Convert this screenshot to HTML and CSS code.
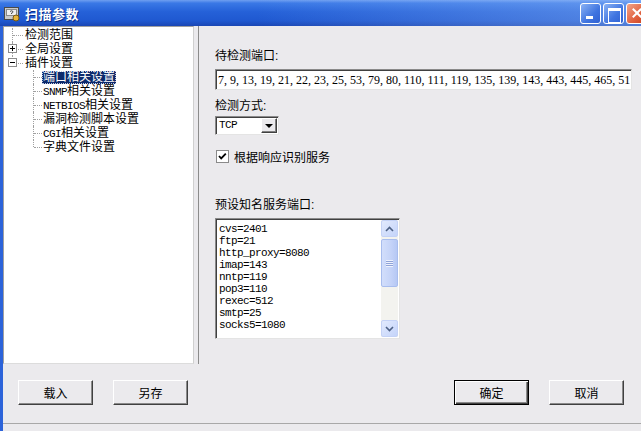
FILE: index.html
```html
<!DOCTYPE html>
<html lang="zh-CN">
<head>
  <meta charset="UTF-8">
  <title>扫描参数</title>
  <link rel="stylesheet" href="styles.css">
</head>
<body>
  <div class="window">
    <div class="titlebar">
      <svg class="app-icon" viewBox="0 0 18 18" width="18" height="18">
        <rect x="1.5" y="3.5" width="14" height="12" fill="#c9c9c9" stroke="#4a4a4a"/>
        <rect x="3.5" y="5.5" width="10" height="6" fill="#efefef" stroke="#8a8a8a"/>
        <path d="M7 7.5 q1.5 -1.5 3 0 q0 1.5 -1.5 1.5 v1" fill="none" stroke="#505050" stroke-width="1"/>
        <circle cx="13" cy="14" r="3" fill="#e6b43a" stroke="#7a5a10"/>
      </svg>
      <span class="title">扫描参数</span>
      <div class="caption-btns">
        <span class="cap-btn min"></span>
        <span class="cap-btn max"></span>
        <span class="cap-btn close"></span>
      </div>
    </div>

    <div class="frame">
      <div class="main">
        <div class="tree">
          <div class="node"><span class="ind root"></span><span class="label">检测范围</span></div>
          <div class="node"><span class="ind root"><span class="toggle plus"></span></span><span class="label">全局设置</span></div>
          <div class="node"><span class="ind root last"><span class="toggle"></span></span><span class="label">插件设置</span></div>
          <div class="node"><span class="ind"></span><span class="ind child"></span><span class="label selected">端口相关设置</span></div>
          <div class="node"><span class="ind"></span><span class="ind child"></span><span class="label"><span class="lat">SNMP</span>相关设置</span></div>
          <div class="node"><span class="ind"></span><span class="ind child"></span><span class="label"><span class="lat">NETBIOS</span>相关设置</span></div>
          <div class="node"><span class="ind"></span><span class="ind child"></span><span class="label">漏洞检测脚本设置</span></div>
          <div class="node"><span class="ind"></span><span class="ind child"></span><span class="label"><span class="lat">CGI</span>相关设置</span></div>
          <div class="node"><span class="ind"></span><span class="ind child last"></span><span class="label">字典文件设置</span></div>
        </div>

        <div class="panel">
          <div class="field-label">待检测端口:</div>
          <div class="textbox">7, 9, 13, 19, 21, 22, 23, 25, 53, 79, 80, 110, 111, 119, 135, 139, 143, 443, 445, 465, 51</div>

          <div class="field-label gap-sm">检测方式:</div>
          <div class="combo">
            <span class="combo-text">TCP</span>
            <span class="combo-btn"><span class="arrow-down"></span></span>
          </div>

          <div class="check-row">
            <svg class="checkbox" viewBox="0 0 13 13" width="13" height="13">
              <rect x="0.5" y="0.5" width="12" height="12" fill="#fff" stroke="#8a8a8a"/>
              <polyline points="3,6 5.2,8.4 9.8,3.6" fill="none" stroke="#000" stroke-width="1.8"/>
            </svg>
            <span>根据响应识别服务</span>
          </div>

          <div class="field-label gap-lg">预设知名服务端口:</div>
          <div class="listbox">
            <div class="list-items">
              <div>cvs=2401</div>
              <div>ftp=21</div>
              <div>http_proxy=8080</div>
              <div>imap=143</div>
              <div>nntp=119</div>
              <div>pop3=110</div>
              <div>rexec=512</div>
              <div>smtp=25</div>
              <div>socks5=1080</div>
            </div>
            <div class="scrollbar">
              <span class="sb-btn"><svg viewBox="0 0 9 6" width="9" height="6"><polyline points="1,5 4.5,1.5 8,5" fill="none" stroke="#4d6185" stroke-width="1.6"/></svg></span>
              <div class="sb-track">
                <div class="sb-thumb"><span class="grip"></span></div>
              </div>
              <span class="sb-btn"><svg viewBox="0 0 9 6" width="9" height="6"><polyline points="1,1 4.5,4.5 8,1" fill="none" stroke="#4d6185" stroke-width="1.6"/></svg></span>
            </div>
          </div>
        </div>
      </div>

      <div class="footer">
        <button class="btn">载入</button>
        <button class="btn">另存</button>
        <span class="spacer"></span>
        <button class="btn default">确定</button>
        <button class="btn">取消</button>
      </div>
      <div class="status"></div>
    </div>
  </div>
</body>
</html>
```

FILE: styles.css
```css
* { box-sizing: border-box; }
html, body { margin: 0; }
body { width: 641px; height: 431px; overflow: hidden; background: #ebeaed; font-family: "Liberation Sans", "Noto Sans CJK SC", sans-serif; font-size: 12px; color: #000; }

.window { display: flex; flex-direction: column; height: 431px; }

/* title bar */
.titlebar { height: 26px; flex: none; display: flex; align-items: center; overflow: hidden;
  background: linear-gradient(to right, rgba(255,255,255,0) 0%, rgba(255,255,255,0) 40%, rgba(150,190,250,0.45) 100%),
              linear-gradient(#6f9ff0 0%, #3a78e6 12%, #2561d8 45%, #1f58d0 80%, #1a46b4 100%); }
.app-icon { margin-left: 3px; flex: none; }
.title { flex: 1; margin-left: 4px; color: #fff; font-weight: bold; font-size: 13px; letter-spacing: 0.5px; text-shadow: 1px 1px 0 #0b2c86; }
.caption-btns { display: flex; gap: 2px; margin-right: -6px; }
.cap-btn { width: 21px; height: 21px; border: 1px solid #fff; border-radius: 3px; position: relative;
  background: linear-gradient(135deg, #8ab2f4 0%, #3f74e0 60%, #2f60d2 100%); }
.cap-btn.min::after { content: ""; position: absolute; left: 5px; bottom: 4px; width: 7px; height: 3px; background: #fff; }
.cap-btn.max::after { content: ""; position: absolute; left: 4px; top: 4px; width: 11px; height: 11px; border: 1px solid #fff; border-top-width: 3px; }
.cap-btn.close { background: linear-gradient(135deg, #f2a488 0%, #e0603e 60%, #c8401f 100%); }
.cap-btn.close::before, .cap-btn.close::after { content: ""; position: absolute; left: 4px; top: 8px; width: 12px; height: 2px; background: #fff; }
.cap-btn.close::before { transform: rotate(45deg); }
.cap-btn.close::after { transform: rotate(-45deg); }

/* frame body */
.frame { flex: 1; display: flex; flex-direction: column; border-left: 3px solid #2c63d9; }
.main { height: 338px; flex: none; display: flex; }

/* tree */
.tree { width: 191px; background: #fff; border: 1px solid; border-color: #a0a0a0 #d0d0d0 #dcdcdc #a0a0a0; padding-top: 1px; }
.node { height: 14px; display: flex; align-items: center; white-space: nowrap; }
.ind { width: 20px; height: 14px; position: relative; flex: none; }
.ind.child { width: 18px; }
.ind.root::before, .ind.child::before { content: ""; position: absolute; left: 8px; top: 0; bottom: 0; border-left: 1px dotted #a0a0a0; }
.ind.child::before { left: 9px; }
.ind.last::before { bottom: 7px; }
.ind.root::after, .ind.child::after { content: ""; position: absolute; left: 9px; top: 7px; width: 10px; border-top: 1px dotted #a0a0a0; }
.ind.child::after { left: 10px; width: 8px; }
.toggle { position: absolute; left: 4px; top: 2px; width: 9px; height: 9px; border: 1px solid #8c8c8c; background: #fff; z-index: 1; }
.toggle::before { content: ""; position: absolute; left: 1px; top: 3px; width: 5px; height: 1px; background: #000; }
.toggle.plus::after { content: ""; position: absolute; left: 3px; top: 1px; width: 1px; height: 5px; background: #000; }
.label { padding: 0 1px; line-height: 13px; height: 13px; }
.label.selected { background: #0c2a6c; color: #fff; outline: 1px dotted #c0c8e0; outline-offset: -1px; }
.lat { font-family: "Liberation Mono", monospace; font-size: 11px; letter-spacing: -0.6px; }

/* right panel */
.panel { flex: 1; margin-left: 4px; border-left: 1px solid #8c8c8c; padding: 23px 0 0 16px; }
.field-label { height: 14px; line-height: 14px; }
.gap-sm { margin-top: 9px; }
.gap-lg { margin-top: 35px; }
.textbox { margin-top: 6px; width: 417px; height: 21px; background: #fff; border: 1px solid; border-color: #8a8a8a #e4e4e4 #e4e4e4 #8a8a8a;
  box-shadow: inset 1px 1px 0 #404040; padding: 3px 0 0 2px; font-family: "Liberation Serif", serif; font-size: 12px; line-height: 14px; white-space: nowrap; overflow: hidden; }

.combo { margin-top: 3px; width: 64px; height: 19px; display: flex; background: #fff; border: 1px solid; border-color: #8a8a8a #e4e4e4 #e4e4e4 #8a8a8a;
  box-shadow: inset 1px 1px 0 #404040; padding: 1px; }
.combo-text { flex: 1; padding-left: 2px; font-family: "Liberation Mono", monospace; font-size: 11px; letter-spacing: -0.6px; line-height: 15px; }
.combo-btn { width: 16px; display: flex; align-items: center; justify-content: center; background: #ebeaed;
  border: 1px solid; border-color: #fff #404040 #404040 #fff; box-shadow: inset -1px -1px 0 #808080; }
.arrow-down { width: 0; height: 0; border-left: 4px solid transparent; border-right: 4px solid transparent; border-top: 4px solid #000; }

.check-row { margin-top: 15px; height: 13px; display: flex; align-items: center; gap: 5px; padding-left: 1px; }
.checkbox { flex: none; }

.listbox { margin-top: 6px; width: 185px; height: 121px; display: flex; background: #fff; border: 1px solid; border-color: #8a8a8a #e4e4e4 #e4e4e4 #8a8a8a;
  box-shadow: inset 1px 1px 0 #404040; padding: 1px; }
.list-items { flex: 1; padding: 3px 0 0 2px; font-family: "Liberation Mono", monospace; font-size: 11px; letter-spacing: -0.6px; line-height: 12px; }
.scrollbar { width: 17px; display: flex; flex-direction: column; background: #f3f3ef; }
.sb-btn { height: 17px; display: flex; align-items: center; justify-content: center; border: 1px solid #c4d2f6; border-radius: 2px;
  background: linear-gradient(135deg, #e2eafd 0%, #c4d4fa 100%); }
.sb-track { flex: 1; padding-top: 2px; }
.sb-thumb { height: 48px; border: 1px solid #a8bdee; border-radius: 2px; background: linear-gradient(to right, #d2defb 0%, #c4d3f8 60%, #b6c8f4 100%);
  display: flex; align-items: center; justify-content: center; }
.grip { width: 7px; height: 7px; background: repeating-linear-gradient(#eef2fd 0 1px, #8fa3d8 1px 2px); }

/* footer buttons */
.footer { height: 59px; flex: none; display: flex; align-items: flex-start; padding: 16px 17px 0 15px; gap: 20px; }
.spacer { flex: 1; }
.btn { width: 75px; height: 25px; padding: 0; background: #ebeaed; color: #000; font-family: "Liberation Sans", "Noto Sans CJK SC", sans-serif; font-size: 12px;
  border: 1px solid; border-color: #fff #404040 #404040 #fff; box-shadow: inset -1px -1px 0 #8a8a8a; }
.btn.default { border-color: #000; box-shadow: inset 1px 1px 0 #fff, inset -1px -1px 0 #404040, inset -2px -2px 0 #8a8a8a; }

.status { flex: 1; border-top: 1px solid #a8a8a8; }
```
